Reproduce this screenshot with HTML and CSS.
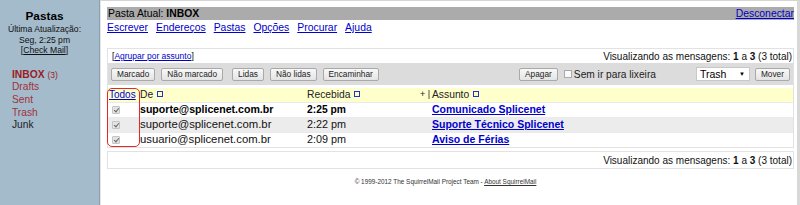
FILE: index.html
```html
<!DOCTYPE html>
<html lang="pt">
<head>
<meta charset="utf-8">
<title>SquirrelMail - INBOX</title>
<link rel="stylesheet" href="styles.css">
</head>
<body>
<div class="page">
  <aside class="sidebar">
    <div class="side-title">Pastas</div>
    <div class="side-info">Última Atualização:</div>
    <div class="side-info">Seg, 2:25 pm</div>
    <div class="side-info">[<a class="check" href="#">Check Mail</a>]</div>
    <ul class="folders">
      <li class="inbox"><b>INBOX</b> <small>(3)</small></li>
      <li class="special">Drafts</li>
      <li class="special">Sent</li>
      <li class="special">Trash</li>
      <li class="plain">Junk</li>
    </ul>
  </aside>
  <main class="main">
    <div class="topbar">
      <span class="current">Pasta Atual: <b>INBOX</b></span>
      <a href="#" class="link">Desconectar</a>
    </div>
    <nav class="menu">
      <a href="#" class="link">Escrever</a>
      <a href="#" class="link">Endereços</a>
      <a href="#" class="link">Pastas</a>
      <a href="#" class="link">Opções</a>
      <a href="#" class="link">Procurar</a>
      <a href="#" class="link">Ajuda</a>
    </nav>
    <section class="box">
      <div class="boxhead">
        <span class="group">[<a href="#" class="link">Agrupar por assunto</a>]</span>
        <span class="count">Visualizando as mensagens: <b>1</b> a <b>3</b> (3 total)</span>
      </div>
      <div class="toolbar">
        <div class="tools-left">
          <span class="btn">Marcado</span>
          <span class="btn">Não marcado</span>
          <span class="btn">Lidas</span>
          <span class="btn">Não lidas</span>
          <span class="btn">Encaminhar</span>
        </div>
        <div class="tools-right">
          <span class="btn">Apagar</span>
          <span class="nobin"><span class="cb-empty"></span>Sem ir para lixeira</span>
          <span class="select">Trash<span class="arrow">▼</span></span>
          <span class="btn">Mover</span>
        </div>
      </div>
      <div class="annot"></div>
      <table class="list">
        <colgroup>
          <col class="c-check"><col class="c-from"><col class="c-date"><col class="c-flag"><col class="c-subj">
        </colgroup>
        <thead>
          <tr>
            <th><a href="#" class="link">Todos</a></th>
            <th>De <span class="sort"></span></th>
            <th>Recebida <span class="sort"></span></th>
            <th class="flag">+ |</th>
            <th>Assunto <span class="sort"></span></th>
          </tr>
        </thead>
        <tbody>
          <tr class="unread">
            <td><span class="cb"></span></td>
            <td class="from">suporte@splicenet.com.br</td>
            <td class="date">2:25 pm</td>
            <td></td>
            <td><a href="#" class="subj">Comunicado Splicenet</a></td>
          </tr>
          <tr class="alt">
            <td><span class="cb"></span></td>
            <td class="from">suporte@splicenet.com.br</td>
            <td class="date">2:22 pm</td>
            <td></td>
            <td><a href="#" class="subj">Suporte Técnico Splicenet</a></td>
          </tr>
          <tr>
            <td><span class="cb"></span></td>
            <td class="from">usuario@splicenet.com.br</td>
            <td class="date">2:09 pm</td>
            <td></td>
            <td><a href="#" class="subj">Aviso de Férias</a></td>
          </tr>
        </tbody>
      </table>
    </section>
    <div class="box bottom">
      <span class="count">Visualizando as mensagens: <b>1</b> a <b>3</b> (3 total)</span>
    </div>
    <div class="footer">© 1999-2012 The SquirrelMail Project Team - <a href="#" class="about">About SquirrelMail</a></div>
  </main>
</div>
</body>
</html>
```
FILE: styles.css
```css
* { box-sizing: border-box; }
html, body { margin: 0; padding: 0; }
body {
  width: 800px;
  height: 205px;
  overflow: hidden;
  font-family: "Liberation Sans", Arial, sans-serif;
  color: #000;
  background: #fff;
}
.page {
  display: flex;
  height: 205px;
}
.sidebar {
  width: 100px;
  flex: none;
  background: #a4bbcc;
  border-right: 1px solid #8c9fae;
  padding: 9px 10px 0 0;
  text-align: center;
}
.side-title {
  font-weight: bold;
  font-size: 11.8px;
  line-height: 14px;
}
.side-info {
  font-size: 8.6px;
  line-height: 10.6px;
  color: #111;
}
.side-info:nth-child(2) { margin-top: 1px; }
.check { color: #111; text-decoration: underline; }
.folders {
  list-style: none;
  margin: 13px -10px 0 0;
  padding: 0 0 0 12px;
  text-align: left;
  font-size: 10.2px;
  line-height: 12.6px;
}
.inbox { color: #9b1b24; }
.inbox b { font-size: 10.3px; }
.inbox small { font-size: 8.5px; }
.special { color: #a2313a; }
.plain { color: #222; }

.main {
  flex: 1;
  border-left: 1px solid #e6e6e6;
  border-top: 1px solid #d4d4d4;
  border-right: 3px solid #d8d8d8;
  padding: 6px 3px 0 6px;
  display: flex;
  flex-direction: column;
  align-items: stretch;
}
.link { color: #0000cc; text-decoration: underline; }
.topbar {
  height: 13px;
  background: #ababab;
  display: flex;
  justify-content: space-between;
  align-items: center;
  font-size: 10.4px;
  padding-left: 1px;
}
.menu {
  margin-top: 1px;
  display: flex;
  gap: 8px;
  font-size: 10.4px;
  line-height: 13px;
}
.box {
  position: relative;
  margin-top: 14px;
  border: 1px solid #e2e2e2;
}
.boxhead {
  height: 14px;
  display: flex;
  justify-content: space-between;
  align-items: center;
  padding: 0 1px 0 4px;
}
.group { font-size: 8.5px; }
.count { font-size: 10px; color: #111; }
.toolbar {
  height: 22px;
  background: #dcdcdc;
  display: flex;
  justify-content: space-between;
  align-items: center;
  padding: 0 3px 0 3px;
}
.tools-left, .tools-right {
  display: flex;
  align-items: center;
  gap: 6px;
}
.btn {
  display: inline-flex;
  align-items: center;
  height: 13px;
  padding: 0 5px;
  font-size: 8.3px;
  color: #222;
  background: linear-gradient(#f8f8f8, #e4e4e4);
  border: 1px solid #a9a9a9;
  border-radius: 2px;
}
.tools-left .btn:nth-child(3) { margin-left: 3px; }
.nobin {
  display: inline-flex;
  align-items: center;
  font-size: 10.2px;
  color: #222;
  margin-right: 34px;
}
.cb-empty {
  width: 8px;
  height: 8px;
  border: 1px solid #aaa;
  background: #fafafa;
  margin-right: 2px;
}
.select {
  display: inline-flex;
  align-items: center;
  justify-content: space-between;
  width: 54px;
  height: 14px;
  background: #fff;
  border: 1px solid #c8c8c8;
  font-size: 10.5px;
  padding: 0 4px 0 3px;
  margin-right: -1px;
}
.arrow { font-size: 6px; }
.list {
  width: 100%;
  border-collapse: collapse;
  table-layout: fixed;
  margin-top: 3px;
  font-size: 10px;
}
.c-check { width: 32px; }
.c-from { width: 167px; }
.c-date { width: 113px; }
.c-flag { width: 12px; }
.list th {
  background: #ffffcc;
  height: 14px;
  padding: 0;
  text-align: left;
  font-weight: normal;
  font-size: 10.3px;
  line-height: 13px;
  color: #222;
  white-space: nowrap;
}
.list th:first-child { padding-left: 1px; font-size: 10px; }
.list th.flag { font-size: 9px; }
.sort {
  display: inline-block;
  width: 6px;
  height: 6px;
  border: 1px solid #2233cc;
  margin-left: 1px;
  vertical-align: 1px;
}
.list td {
  height: 15px;
  padding: 0;
  line-height: 13px;
  white-space: nowrap;
  overflow: hidden;
  border-top: 1px solid #eaeaea;
}
.list tr.alt td { background: #ececec; }
.cb {
  display: block;
  width: 8px;
  height: 8px;
  margin-left: 4px;
  background: #e4e4e4;
  border: 1px solid #c4c4c4;
  border-radius: 1px;
  position: relative;
}
.cb::after {
  content: "";
  position: absolute;
  left: 2px;
  top: 0px;
  width: 2px;
  height: 4px;
  border: solid #666;
  border-width: 0 1.4px 1.4px 0;
  transform: rotate(40deg);
}
.from { font-size: 11.3px; color: #111; }
.date { font-size: 10.8px; color: #111; }
.unread .from { font-weight: bold; font-size: 10.6px; color: #000; }
.unread .date { font-weight: bold; font-size: 10.3px; color: #000; }
.subj {
  font-weight: bold;
  font-size: 10.5px;
  color: #0000cc;
  text-decoration: underline;
}
.annot {
  position: absolute;
  left: -1px;
  top: 39px;
  width: 33px;
  height: 59px;
  border: 1.5px solid #e02a2a;
  border-radius: 5px;
  pointer-events: none;
  z-index: 2;
}
.bottom {
  margin-top: 3px;
  height: 18px;
  display: flex;
  justify-content: flex-end;
  align-items: center;
  padding-right: 1px;
}
.footer {
  margin-top: 9px;
  text-align: center;
  font-size: 6.4px;
  color: #333;
  padding-right: 10px;
}
.about { color: #333; text-decoration: underline; }
```
